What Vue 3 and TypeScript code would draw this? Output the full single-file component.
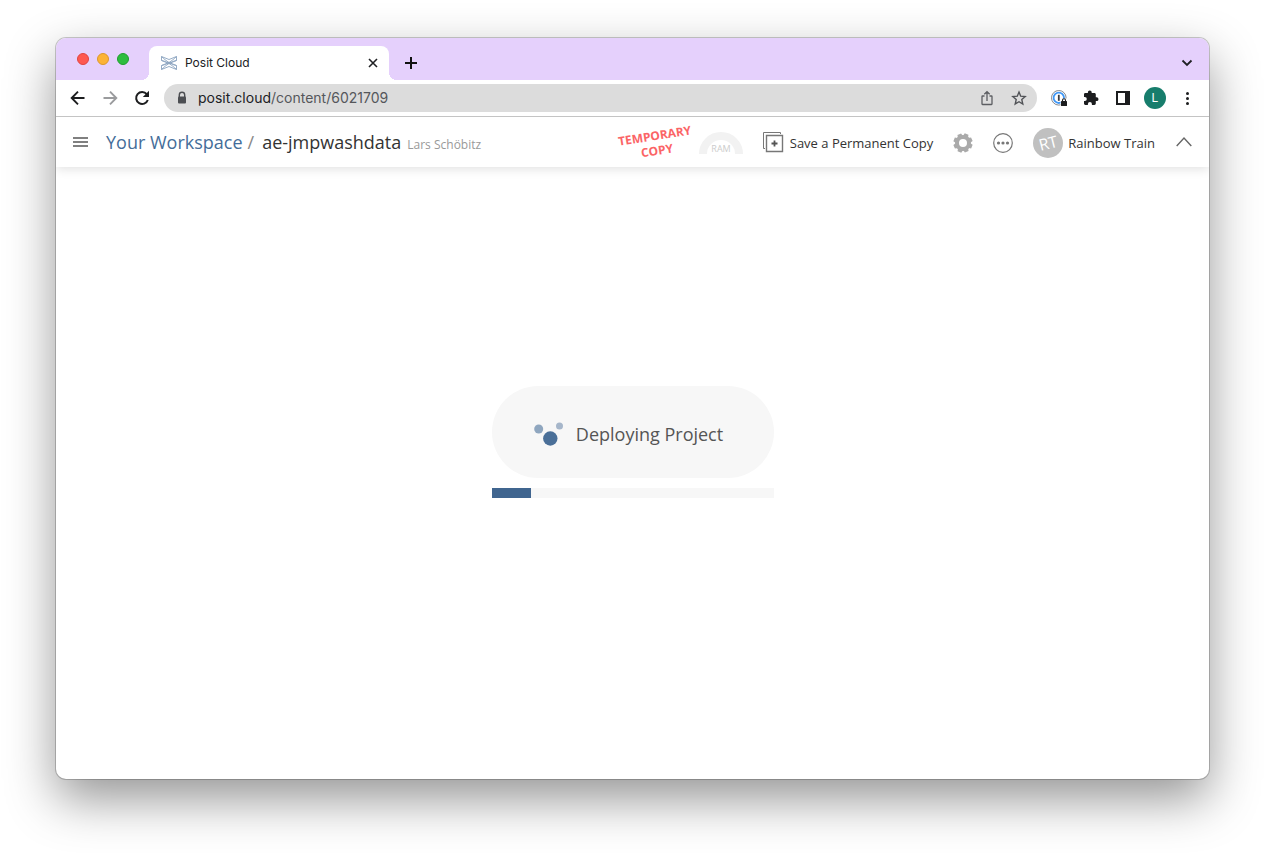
<script setup lang="ts">
import { ref } from 'vue'

const address = ref({ host: 'posit.cloud', path: '/content/6021709' })
const progress = ref(14)
const project = ref({ space: 'Your Workspace', name: 'ae-jmpwashdata', owner: 'Lars Schöbitz' })
const user = ref({ initials: 'RT', name: 'Rainbow Train' })
const teeth = [0, 45, 90, 135, 180, 225, 270, 315]
</script>

<template>
  <div class="desktop">
    <div class="window">
      <div class="tabstrip">
        <div class="lights">
          <button class="light red" aria-label="Close window"></button>
          <button class="light amber" aria-label="Minimise window"></button>
          <button class="light green" aria-label="Zoom window"></button>
        </div>
        <div class="tab">
          <svg class="favicon" width="16" height="16" viewBox="0 0 16 16" fill="none" stroke="#8ba4c0" stroke-width="0.9">
            <path d="M.5 5.500V1.500L8 4.500l7.500-3v4L8 8.500z" />
            <path d="M.5 10.500v4L8 11.500l7.500 3v-4L8 7.500z" />
            <path d="M.5 1.500C5 6 11 10 15.500 10.500M15.500 1.500C11 6 5 10 .5 10.500M.5 5.500C5 6 11 10 15.500 14.500M15.500 5.500C11 6 5 10 .5 14.500" />
          </svg>
          <span class="tab-title">Posit Cloud</span>
          <button class="icon-btn" aria-label="Close tab">
            <svg width="16" height="16" viewBox="0 0 16 16" stroke="#202124" stroke-width="1.6"><path d="m4 4 8 8M12 4l-8 8" /></svg>
          </button>
        </div>
        <button class="icon-btn new-tab" aria-label="New tab">
          <svg width="16" height="16" viewBox="0 0 16 16" stroke="#111" stroke-width="2"><path d="M8 2v12M2 8h12" /></svg>
        </button>
        <button class="icon-btn tab-search" aria-label="Search tabs">
          <svg width="16" height="16" viewBox="0 0 16 16" fill="none" stroke="#202124" stroke-width="1.8"><path d="m3.500 5.500 4.500 4.500 4.500-4.500" /></svg>
        </button>
      </div>

      <div class="toolbar">
        <div class="nav">
          <button class="icon-btn" aria-label="Back">
            <svg width="16" height="16" viewBox="0 0 16 16" fill="none" stroke="#1c1d1f" stroke-width="1.9"><path d="M14.500 8H2M8 1.700 1.700 8 8 14.300" /></svg>
          </button>
          <button class="icon-btn" aria-label="Forward">
            <svg width="16" height="16" viewBox="0 0 16 16" fill="none" stroke="#9a9b9d" stroke-width="1.9"><path d="M1.500 8H14M8 1.700 14.300 8 8 14.300" /></svg>
          </button>
          <button class="icon-btn" aria-label="Reload">
            <svg width="16" height="16" viewBox="0 0 16 16" fill="none" stroke="#1c1d1f" stroke-width="2"><path d="M12.800 4.200A6 6 0 1 0 13.800 10" /><path d="M15 .8V7H8.800z" fill="#1c1d1f" stroke="none" /></svg>
          </button>
        </div>
        <div class="omnibox">
          <svg width="12" height="14" viewBox="0 0 12 14"><path d="M3.300 6V4a2.700 2.700 0 0 1 5.400 0v2" fill="none" stroke="#4c4e52" stroke-width="1.4" /><rect x="2" y="5.500" width="8" height="7" rx="1" fill="#4c4e52" /></svg>
          <span class="url"><span class="host">{{ address.host }}</span>{{ address.path }}</span>
          <button class="icon-btn" aria-label="Share">
            <svg width="16" height="16" viewBox="0 0 16 16" fill="none" stroke="#5c5e62" stroke-width="1.3"><path d="M5.500 6H3.500q-.5 0-.5.500V14q0 .5.500.500h9q.5 0 .5-.5V6.500q0-.5-.5-.5h-2M8 11V1.800M5.300 4.300 8 1.700l2.700 2.600" /></svg>
          </button>
          <button class="icon-btn" aria-label="Bookmark">
            <svg width="16" height="16" viewBox="0 0 16 16" fill="none" stroke="#505256" stroke-width="1.4"><path d="m8 2 1.700 4.200 4.500.4-3.400 3 1 4.400L8 11.700 4.200 14l1-4.400-3.400-3 4.500-.4z" /></svg>
          </button>
        </div>
        <div class="extensions">
          <button class="icon-btn" aria-label="Password manager">
            <svg width="16" height="16" viewBox="0 0 16 16"><circle cx="7.800" cy="7.800" r="7.300" fill="#fff" stroke="#85888d" /><circle cx="7.800" cy="7.800" r="5.200" fill="none" stroke="#3f97f6" stroke-width="1.8" /><path d="M7.800 4.800v6" stroke="#3c3e43" stroke-width="1.8" /><path d="M9.500 8.500h7V16h-7z" fill="#fff" /><rect x="10" y="11" width="6" height="5" rx=".6" fill="#1c1d1f" /><path d="M11.500 11.500v-1.200a1.500 1.500 0 0 1 3 0v1.200" fill="none" stroke="#1c1d1f" stroke-width="1.1" /></svg>
          </button>
          <button class="icon-btn" aria-label="Extensions">
            <svg width="16" height="16" viewBox="0 0 16 16" fill="#1c1d1f"><path d="M13.600 7.300h-.8V4.500c0-.8-.6-1.400-1.400-1.400H8.700v-.8a1.900 1.900 0 0 0-3.800 0v.8H2.300C1.500 3.100 1 3.700 1 4.500v2.400h.8a2 2 0 0 1 0 4H1v2.600c0 .8.600 1.400 1.300 1.400h2.600v-.8a2 2 0 0 1 4 0v.8h2.500c.8 0 1.400-.6 1.400-1.400v-2.400h.8a1.900 1.900 0 0 0 0-3.800z" /></svg>
          </button>
          <button class="icon-btn" aria-label="Side panel">
            <svg width="16" height="16" viewBox="0 0 16 16"><path d="M2 2h12v12H2z" fill="none" stroke="#1c1d1f" stroke-width="2" /><path d="M10 2h4v12h-4z" fill="#1c1d1f" /></svg>
          </button>
          <button class="profile" aria-label="Profile L">L</button>
          <button class="icon-btn" aria-label="Browser menu">
            <svg width="16" height="16" viewBox="0 0 16 16" fill="#1c1d1f"><circle cx="8.500" cy="3.500" r="1.500" /><circle cx="8.500" cy="8.500" r="1.500" /><circle cx="8.500" cy="13.500" r="1.500" /></svg>
          </button>
        </div>
      </div>

      <header class="app-header">
        <button class="icon-btn menu" aria-label="Menu">
          <svg width="16" height="16" viewBox="0 0 16 16" stroke="#808080" stroke-width="2"><path d="M0 3h15M0 7h15M0 11h15" /></svg>
        </button>
        <nav class="crumbs">
          <a href="#">{{ project.space }}</a>
          <span class="slash">/</span>
          <span class="project">{{ project.name }}</span>
          <span class="owner">{{ project.owner }}</span>
        </nav>
        <div class="actions">
          <div class="stamp">TEMPORARY<br />COPY</div>
          <button class="icon-btn ram" aria-label="RAM usage">
            <svg width="44" height="22" viewBox="0 0 44 22"><path d="M4 22a18 18 0 0 1 36 0" fill="none" stroke="#f2f2f2" stroke-width="8" /><text x="22" y="20" text-anchor="middle">RAM</text></svg>
          </button>
          <button class="save">
            <svg width="22" height="22" viewBox="0 0 22 22" fill="none" stroke="#777"><path d="M2 16.500H.5V.5h17V2" /><path d="M3.500 3.500h16v16h-16z" stroke-width="1.4" /><path d="M11.500 8.500v6M8.500 11.500h6" stroke="#555" stroke-width="1.8" /></svg>
            <span>Save a Permanent Copy</span>
          </button>
          <button class="icon-btn settings" aria-label="Settings">
            <svg width="20" height="20" viewBox="0 0 20 20">
              <path v-for="angle in teeth" :key="angle" d="M7.200 4 8 .4h4l.8 3.600z" :transform="`rotate(${angle + 22} 10 10)`" fill="#aaa" />
              <circle cx="10" cy="10" r="6" fill="none" stroke="#aaa" stroke-width="4" />
            </svg>
          </button>
          <button class="icon-btn more" aria-label="More actions">
            <svg width="20" height="20" viewBox="0 0 20 20" fill="#777"><circle cx="10" cy="10" r="9.300" fill="none" stroke="#777" stroke-width="1.2" /><circle cx="5.500" cy="10" r="1.600" /><circle cx="10" cy="10" r="1.600" /><circle cx="14.500" cy="10" r="1.600" /></svg>
          </button>
          <button class="account">
            <span class="avatar"><span>{{ user.initials }}</span></span>
            <span>{{ user.name }}</span>
          </button>
          <button class="icon-btn" aria-label="Collapse header">
            <svg width="16" height="16" viewBox="0 0 16 16" fill="none" stroke="#666" stroke-width="1.4"><path d="m.7 11 7.300-8 7.300 8" /></svg>
          </button>
        </div>
      </header>

      <main class="content">
        <div class="deploy" role="status">
          <div class="pill">
            <svg width="30" height="24" viewBox="0 0 30 24"><circle cx="4.700" cy="7" r="4.500" fill="#8fa6bf" /><circle cx="25.500" cy="4" r="3.500" fill="#a6b6ca" /><circle cx="16.300" cy="16.500" r="7.200" fill="#4a6f98" /></svg>
            <span>Deploying Project</span>
          </div>
          <div class="track"><div class="fill" :style="{ width: progress + '%' }"></div></div>
        </div>
      </main>
    </div>
  </div>
</template>

<style>
body {
  margin: 0;
  background: #fff;
}
</style>

<style scoped>
* {
  box-sizing: border-box;
}
button {
  padding: 0;
  border: 0;
  background: none;
  font: inherit;
  color: inherit;
  cursor: pointer;
}
svg {
  display: block;
  flex: none;
}
.desktop {
  display: flex;
  min-height: 100vh;
  padding: 38px 56px 74px;
  overflow: hidden;
  font-family: "Open Sans", "Noto Sans", sans-serif;
}
.window {
  flex: 1;
  display: flex;
  flex-direction: column;
  min-width: 0;
  border-radius: 10px;
  background: #fff;
  box-shadow: 0 0 0 1px rgba(0, 0, 0, 0.2), 0 20px 50px rgba(0, 0, 0, 0.42);
}
.icon-btn {
  flex: none;
}
.tabstrip {
  display: flex;
  align-items: center;
  height: 42px;
  padding: 8px 14px 0 21px;
  border-radius: 10px 10px 0 0;
  background: #e5d0fc;
  font-family: Inter, sans-serif;
}
.lights {
  display: flex;
  gap: 8px;
  margin: 0 20px 8px 0;
}
.light {
  width: 12px;
  height: 12px;
  border: 1px solid;
  border-radius: 50%;
}
.red {
  background: #fe5850;
  border-color: #e04440;
}
.amber {
  background: #fcb336;
  border-color: #dc982c;
}
.green {
  background: #2dbd3e;
  border-color: #209f2e;
}
.tab {
  position: relative;
  display: flex;
  align-items: center;
  width: 240px;
  height: 34px;
  padding: 0 8px 0 12px;
  border-radius: 8px 8px 0 0;
  background: #fff;
}
.tab::before,
.tab::after {
  content: "";
  position: absolute;
  bottom: 0;
  width: 8px;
  height: 8px;
}
.tab::before {
  right: 100%;
  background: radial-gradient(circle at 0 0, transparent 8px, #fff 8px);
}
.tab::after {
  left: 100%;
  background: radial-gradient(circle at 100% 0, transparent 8px, #fff 8px);
}
.tab-title {
  flex: 1;
  margin-left: 8px;
  padding-bottom: 2px;
  font-size: 12px;
  color: #202124;
}
.new-tab {
  margin-left: 14px;
}
.tab-search {
  margin-left: auto;
}
.toolbar {
  display: flex;
  align-items: center;
  height: 37px;
  padding: 0 14px;
  border-bottom: 1px solid #c4c4c4;
  font-family: Inter, sans-serif;
}
.nav {
  display: flex;
  gap: 16px;
  margin-right: 14px;
}
.omnibox {
  flex: 1;
  display: flex;
  align-items: center;
  gap: 16px;
  height: 28px;
  padding: 0 10px 0 12px;
  border-radius: 14px;
  background: #dcdcdc;
}
.url {
  flex: 1;
  margin-left: -6px;
  padding-bottom: 2px;
  font-size: 14px;
  color: #55575b;
}
.host {
  color: #202124;
}
.extensions {
  display: flex;
  align-items: center;
  gap: 16px;
  margin-left: 14px;
}
.profile {
  width: 22px;
  height: 22px;
  margin: 0 -3px;
  border-radius: 50%;
  background: #177d6c;
  color: #fff;
  font-size: 12px;
  line-height: 22px;
}
.app-header {
  display: flex;
  align-items: center;
  height: 50px;
  padding: 2px 17px 0;
  box-shadow: 0 2px 10px rgba(0, 0, 0, 0.12);
  clip-path: inset(0 0 -16px 0);
  color: #333;
  font-size: 13px;
}
.crumbs {
  display: flex;
  align-items: baseline;
  margin-left: 17px;
  font-size: 18px;
  line-height: 24px;
  white-space: nowrap;
}
.crumbs a {
  color: #446d99;
  text-decoration: none;
}
.slash {
  margin: 0 8px 0 5px;
  color: #888;
}
.owner {
  margin-left: 6px;
  color: #999;
  font-size: 12px;
}
.actions {
  display: flex;
  align-items: center;
  margin-left: auto;
  white-space: nowrap;
}
.stamp {
  transform: rotate(-9deg);
  color: #fb6466;
  font-size: 12px;
  font-weight: 700;
  line-height: 15px;
  text-align: center;
}
.ram {
  margin: 0 20px 0 6px;
}
.ram text {
  fill: #ccc;
  font-size: 9px;
}
.save {
  display: flex;
  align-items: center;
  gap: 5px;
}
.settings {
  margin-left: 20px;
}
.more {
  margin: 0 20px;
}
.account {
  display: flex;
  align-items: center;
  gap: 5px;
  margin-right: 21px;
}
.avatar {
  width: 30px;
  height: 30px;
  border-radius: 50%;
  background: #c0c0c0;
  color: #fff;
  font-size: 16px;
  line-height: 30px;
}
.avatar span {
  display: block;
  transform: rotate(-14deg);
}
.content {
  flex: 1;
  display: flex;
  align-items: center;
  justify-content: center;
  padding-bottom: 62px;
}
.deploy {
  width: 282px;
}
.pill {
  display: flex;
  align-items: center;
  justify-content: center;
  gap: 12px;
  height: 92px;
  margin-bottom: 10px;
  padding: 4px 8px 0 0;
  border-radius: 46px;
  background: #f7f7f7;
  color: #555;
  font-size: 18px;
}
.track {
  height: 10px;
  background: #f7f7f7;
}
.fill {
  height: 100%;
  background: #40658f;
}
</style>
